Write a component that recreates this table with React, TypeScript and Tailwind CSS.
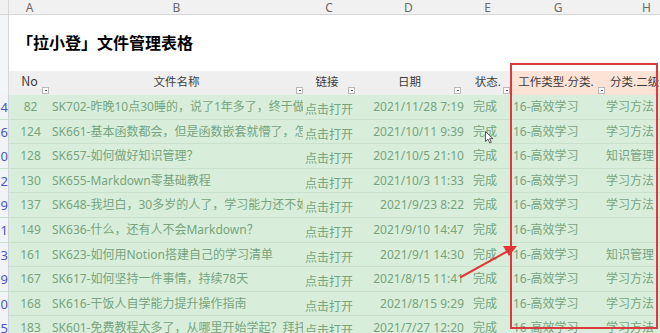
import React from "react";

const rows = [
  { r: "4", no: "82", name: "SK702-昨晚10点30睡的，说了1年多了，终于做到了", date: "2021/11/28 7:19", g: "16-高效学习", h: "学习方法" },
  { r: "6", no: "124", name: "SK661-基本函数都会，但是函数嵌套就懵了，怎么办", date: "2021/10/11 9:39", g: "16-高效学习", h: "学习方法" },
  { r: "0", no: "128", name: "SK657-如何做好知识管理？", date: "2021/10/5 21:10", g: "16-高效学习", h: "知识管理" },
  { r: "2", no: "130", name: "SK655-Markdown零基础教程", date: "2021/10/3 11:33", g: "16-高效学习", h: "学习方法" },
  { r: "9", no: "137", name: "SK648-我坦白，30多岁的人了，学习能力还不如", date: "2021/9/23 8:22", g: "16-高效学习", h: "学习方法" },
  { r: "1", no: "149", name: "SK636-什么，还有人不会Markdown？", date: "2021/9/10 14:47", g: "16-高效学习", h: "" },
  { r: "3", no: "161", name: "SK623-如何用Notion搭建自己的学习清单", date: "2021/9/1 14:30", g: "16-高效学习", h: "知识管理" },
  { r: "9", no: "167", name: "SK617-如何坚持一件事情，持续78天", date: "2021/8/15 11:41", g: "16-高效学习", h: "学习方法" },
  { r: "0", no: "168", name: "SK616-干饭人自学能力提升操作指南", date: "2021/8/15 9:29", g: "16-高效学习", h: "学习方法" },
  { r: "5", no: "183", name: "SK601-免费教程太多了，从哪里开始学起？拜托！", date: "2021/7/27 12:20", g: "16-高效学习", h: "学习方法" },
];

const grid = "grid grid-cols-[9px_41px_253px_52px_115px_41px_94px_75px] w-[680px]";

function Drop({ right }: { right: string }) {
  return (
    <div className={`absolute bottom-[1px] ${right} w-[7px] h-[7px] bg-white border border-[#b8b8b8] flex items-center justify-center`}>
      <div className="w-[2px] h-[1px] bg-[#555]" />
    </div>
  );
}

export default function App() {
  return (
    <div
      className="relative w-[660px] h-[333px] overflow-hidden bg-white text-[12px]"
      style={{ fontFamily: '"Noto Sans", "Noto Sans CJK SC", sans-serif' }}
    >
      {/* column letters */}
      <div className={`${grid} h-[15px] bg-[#f1f1f1] border-b border-[#d6d6d6] text-[12px] text-[#6a6a6a] leading-[15px]`}>
        <div className="border-r border-[#d6d6d6]" />
        <div className="text-center">A</div>
        <div className="text-center">B</div>
        <div className="text-center">C</div>
        <div className="text-center pr-[8px]">D</div>
        <div className="text-center pr-[6px]">E</div>
        <div className="text-center">G</div>
        <div className="text-center pl-[8px]">H</div>
      </div>

      {/* title row */}
      <div className="flex h-[56px]">
        <div className="w-[9px] border-r border-[#d6d6d6] bg-[#f4f5f8]" />
        <div
          className="flex items-center pl-[8px] pb-[2px] text-[16px] font-bold text-black"
          style={{ fontFamily: '"Noto Sans CJK SC", sans-serif' }}
        >
          「拉小登」文件管理表格
        </div>
      </div>

      {/* header row */}
      <div
        className={`${grid} h-[24px] bg-[#efefef] text-[11.5px] text-[#3c3c3c] leading-[16px]`}
        style={{ fontFamily: '"Noto Sans CJK SC", sans-serif' }}
      >
        <div className="bg-[#f4f5f8] border-r border-[#d6d6d6]" />
        <div className="relative text-center pt-[2px] text-[12.5px]">
          No
          <Drop right="right-[1px]" />
        </div>
        <div className="relative text-center pt-[2px]">
          文件名称
          <Drop right="right-[0px]" />
        </div>
        <div className="relative text-center pt-[2px] pr-[4px]">
          链接
          <Drop right="right-[0px]" />
        </div>
        <div className="relative text-center pt-[2px] pr-[6px]">
          日期
          <Drop right="right-[9px]" />
        </div>
        <div className="relative text-right pt-[2px] pr-[10px]">
          状态.
          <Drop right="right-[1px]" />
        </div>
        <div className="relative bg-[#fce3d6] text-center pt-[2px] pr-[4px]">
          工作类型.分类.
          <Drop right="right-[0px]" />
        </div>
        <div className="bg-[#fce3d6] pl-[5px] pt-[2px] whitespace-nowrap overflow-hidden">分类.二级分类</div>
      </div>

      {/* data rows */}
      <div style={{ fontFamily: '"Noto Sans", "Noto Sans CJK SC", sans-serif' }}>
        {rows.map((row, i) => (
          <div
            key={i}
            className={`${grid} h-[24.6px] bg-[#d9eeda] text-[#76a47e] border-b border-[#c9e0ca] leading-[24px] text-[12px]`}
          >
            <div className="bg-[#f1f3f8] border-r border-[#cfd4dc] text-[#4a55c8] text-[13px] text-right overflow-hidden">{row.r}</div>
            <div className="text-center pl-[2px]">{row.no}</div>
            <div className="pl-[2px] whitespace-nowrap overflow-hidden">{row.name}</div>
            <div className="flex items-end pl-[2px] leading-[18px] whitespace-nowrap overflow-hidden">点击打开</div>
            <div className="text-right pr-[6px] whitespace-nowrap">{row.date}</div>
            <div className="pl-[3px] whitespace-nowrap overflow-hidden">完成</div>
            <div className="pl-[2px] whitespace-nowrap">{row.g}</div>
            <div className="pl-[1px] whitespace-nowrap overflow-hidden">{row.h}</div>
          </div>
        ))}
      </div>

      {/* red highlight box */}
      <div className="absolute left-[510px] top-[63px] w-[148px] h-[266px] border-[2px] border-[#dc3a3f]" />

      {/* red arrow */}
      <svg className="absolute left-0 top-0" width="660" height="333" viewBox="0 0 660 333">
        <line x1="461" y1="277" x2="508" y2="251" stroke="#e3363b" strokeWidth="2" strokeLinecap="round" />
        <polygon points="517,246 503,246 509,256" fill="#e3363b" />
      </svg>

      {/* mouse cursor */}
      <svg className="absolute left-[485px] top-[131px]" width="9" height="13" viewBox="0 0 9 13">
        <path d="M0.5 0.5 L0.5 10.5 L3 8.2 L4.8 12 L6.3 11.3 L4.6 7.7 L8 7.7 Z" fill="#ffffff" stroke="#333" strokeWidth="0.8" strokeLinejoin="round" />
      </svg>
    </div>
  );
}
